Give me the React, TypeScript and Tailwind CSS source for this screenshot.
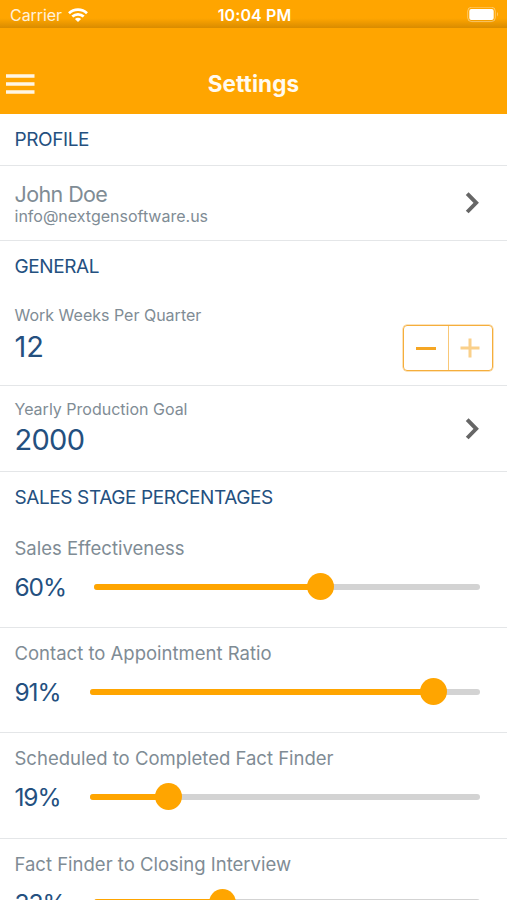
import { useState } from "react"

type Stage = {
    label: string
    value: number
    valueWidth: string
    thumb: number
}

const stages: Stage[] = [
    { label: "Sales Effectiveness", value: 60, valueWidth: "w-[79px]", thumb: 213.5 },
    { label: "Contact to Appointment Ratio", value: 91, valueWidth: "w-[75px]", thumb: 330 },
    { label: "Scheduled to Completed Fact Finder", value: 19, valueWidth: "w-[75px]", thumb: 65.5 },
    { label: "Fact Finder to Closing Interview", value: 33, valueWidth: "w-[79px]", thumb: 115 },
]

function StatusBar() {
    return (
        <div className="h-7 shrink-0 grid grid-cols-3 items-center pl-[10px] pr-[8px] pt-[2px] text-white text-[16px] bg-linear-to-b from-[#ffa500] from-65% to-[#d98c00]">
            <div className="flex items-center gap-[6px]">
                <span className="tracking-[-0.05px] opacity-85">Carrier</span>
                <svg width="20" height="14" viewBox="0 0 20 14" fill="none" stroke="white" strokeWidth="2.7">
                    <path d="M1 5.2C6 .4 14 .4 19 5.2" />
                    <path d="M4.3 8.6C7.6 5.5 12.4 5.5 15.7 8.6" />
                    <path d="M10 14L6.9 10.9C8.6 9.3 11.4 9.3 13.1 10.9Z" fill="white" stroke="none" />
                </svg>
            </div>
            <span className="text-center font-semibold tracking-[0.1px] whitespace-nowrap">10:04 PM</span>
            <svg className="justify-self-end" width="32" height="16" viewBox="0 0 32 16" fill="none">
                <rect x="0.7" y="0.2" width="27.6" height="14.4" rx="4" stroke="white" strokeOpacity="0.4" />
                <rect x="2.3" y="1.9" width="24.4" height="11" rx="2" fill="white" />
                <path d="M30 5v4.4c1.4-.8 1.4-3.6 0-4.4z" fill="white" fillOpacity="0.4" />
            </svg>
        </div>
    )
}

function Chevron() {
    return (
        <svg width="16" height="24" viewBox="0 0 16 24" fill="none" stroke="#666" strokeWidth="3.9">
            <path d="M2.2 2.6L11.2 11.8L2.2 21" />
        </svg>
    )
}

function SectionTitle({ children }: { children: string }) {
    return <h2 className="text-[19px] leading-6 tracking-[-0.4px] text-[#24507f]">{children}</h2>
}

function StageRow({ stage }: { stage: Stage }) {
    return (
        <div className="h-[105.2px] shrink-0 px-[14.5px] pt-[13px] border-b border-[#e4e6e8]">
            <p className="text-[18.5px] leading-6 text-[#7f8c95]">{stage.label}</p>
            <div className="flex items-center h-[30px] mt-3">
                <span className={`${stage.valueWidth} shrink-0 text-[24.5px] leading-[30px] tracking-[-1.1px] text-[#24507f]`}>{stage.value}%</span>
                <div className="relative flex-1 h-[6px] mr-[13px] mb-px rounded-full bg-[#d3d3d3]">
                    <div className="h-full rounded-full bg-[#ffa500]" style={{ width: stage.thumb + 13 }} />
                    <div className="absolute -top-[10.5px] size-[27px] rounded-full bg-[#ffa500]" style={{ left: stage.thumb }} />
                </div>
            </div>
        </div>
    )
}

export default function App() {
    const [weeks, setWeeks] = useState(12)

    return (
        <div className="w-full h-[900px] overflow-hidden flex flex-col bg-white font-['Inter','Liberation_Sans',sans-serif]">
            <StatusBar />

            {/* Nav bar */}
            <header className="h-[86px] shrink-0 grid grid-cols-3 items-center bg-[#ffa500] px-[5.5px] pt-[26px]">
                <button className="w-[29px]">
                    <svg width="29" height="20" viewBox="0 0 29 20" stroke="#fff6e5" strokeWidth="3.4">
                        <path d="M0 2h28.5M0 10h28.5M0 18h28.5" />
                    </svg>
                </button>
                <h1 className="text-center text-[22.5px] font-bold tracking-[0.1px] text-[#fffaf0]">Settings</h1>
            </header>

            {/* Profile */}
            <div className="h-[52px] shrink-0 px-[14.5px] pt-[14px] border-b border-[#e4e6e8]">
                <SectionTitle>PROFILE</SectionTitle>
            </div>
            <div className="h-[75px] shrink-0 flex items-center justify-between pl-[14.5px] pr-[26px] border-b border-[#e4e6e8]">
                <div>
                    <p className="text-[21.5px] leading-6 tracking-[-0.6px] pt-px text-[#7f8c95]">John Doe</p>
                    <p className="text-[16px] leading-5 text-[#7f8c95]">info@nextgensoftware.us</p>
                </div>
                <Chevron />
            </div>

            {/* General */}
            <div className="h-[145px] shrink-0 px-[14.5px] pt-[14px] border-b border-[#e4e6e8]">
                <SectionTitle>GENERAL</SectionTitle>
                <div className="flex justify-between">
                    <div className="pt-[26px]">
                        <p className="text-[16px] leading-5 text-[#7f8c95]">Work Weeks Per Quarter</p>
                        <p className="text-[29px] leading-9 mt-1 text-[#24507f]">{weeks}</p>
                    </div>
                    <div className="mt-[46px] -mr-[0.5px] flex w-[90px] h-[46px] rounded-[4px] border-[1.5px] border-[#f5ae3c] shadow-[0_0_0_0.5px_#f9c878]">
                        <button className="flex-1 flex items-center justify-center border-r border-[#f9c878]" onClick={() => setWeeks(weeks - 1)}>
                            <span className="w-5 h-[3px] bg-[#f5a623]" />
                        </button>
                        <button className="flex-1 flex items-center justify-center" disabled>
                            <svg width="20" height="20" viewBox="0 0 20 20" stroke="#fad08a" strokeWidth="3">
                                <path d="M10 .5v19M.5 10h19" />
                            </svg>
                        </button>
                    </div>
                </div>
            </div>
            <div className="h-[86px] shrink-0 flex items-center justify-between pl-[14.5px] pr-[26px] border-b border-[#e4e6e8]">
                <div>
                    <p className="text-[16px] leading-5 text-[#7f8c95]">Yearly Production Goal</p>
                    <p className="text-[29px] leading-9 mt-[3px] tracking-[-0.7px] text-[#24507f]">2000</p>
                </div>
                <Chevron />
            </div>

            {/* Sales stages */}
            <div className="h-[51px] shrink-0 px-[14.5px] pt-[14px]">
                <SectionTitle>SALES STAGE PERCENTAGES</SectionTitle>
            </div>
            {stages.map((stage) => (
                <StageRow key={stage.label} stage={stage} />
            ))}
        </div>
    )
}
